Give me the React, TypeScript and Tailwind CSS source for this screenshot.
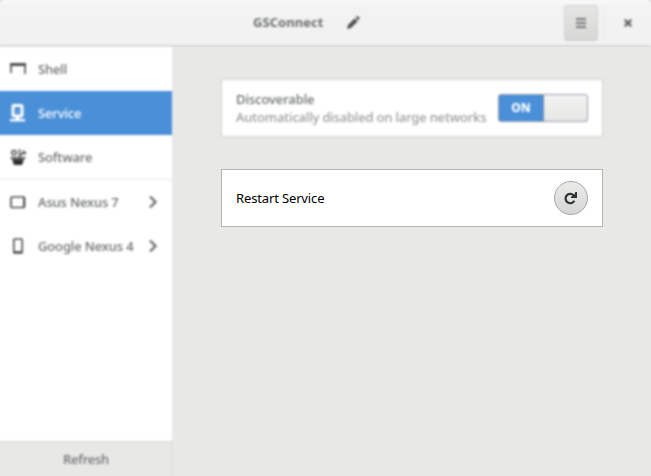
import type { ReactNode } from "react";

function ShellIcon() {
  return (
    <svg className="h-4 w-4" viewBox="0 0 16 16" fill="none" stroke="currentColor">
      <path d="M0 3.5H16" strokeWidth="3" />
      <path d="M1 4V12M15 4V13" strokeWidth="1.6" />
    </svg>
  );
}

function ServiceIcon() {
  return (
    <svg className="h-[18px] w-4" viewBox="0 0 16 18" fill="none" stroke="currentColor">
      <rect x="3" y="1.5" width="9" height="10.5" rx="1" strokeWidth="3" />
      <path d="M7.5 12V16" strokeWidth="4" />
      <path d="M7 7.5H8.5" strokeWidth="1.5" opacity="0.6" />
      <path d="M0 16.2H15" strokeWidth="2.4" />
    </svg>
  );
}

function SoftwareIcon() {
  return (
    <svg className="h-4 w-4" viewBox="0 0 16 16" fill="none" stroke="currentColor">
      <path d="M0.5 9H15.5" strokeWidth="1.8" />
      <path d="M3 11H13L11.5 15.3H4.5Z" fill="#2c2e2f" stroke="#2c2e2f" strokeWidth="1.4" />
      <circle cx="4" cy="3.8" r="2.3" strokeWidth="1.5" />
      <path d="M9.5 0V9M9.5 6.5L13 4.5M13 1.5V4.5H15.5V2" strokeWidth="1.5" />
    </svg>
  );
}

function TabletIcon() {
  return (
    <svg className="h-4 w-4" viewBox="0 0 16 16" fill="none" stroke="currentColor">
      <rect x="1" y="3" width="13.5" height="10.5" rx="1" strokeWidth="1.7" />
      <path d="M14 3.5V13" strokeWidth="1.8" />
    </svg>
  );
}

function PhoneIcon() {
  return (
    <svg className="h-4 w-4" viewBox="0 0 16 16" fill="none" stroke="currentColor">
      <rect x="3.8" y="1" width="8.4" height="14" rx="0.8" strokeWidth="1.6" />
      <path d="M4 14H12" strokeWidth="1.8" />
    </svg>
  );
}

function Chevron() {
  return (
    <svg className="mr-[11px] ml-auto h-4 w-4" viewBox="0 0 16 16" fill="none" stroke="#6e7071" strokeWidth="2.4">
      <path d="M5 2.5L10.5 8L5 13.5" />
    </svg>
  );
}

type RowProps = { icon: ReactNode; label: string; active?: boolean; device?: boolean };

function Row({ icon, label, active, device }: RowProps) {
  return (
    <div
      className={
        "flex h-11 shrink-0 items-center pl-[18px] leading-[18px] " +
        (active ? "bg-[#4a90d9] text-white" : "text-[#4c4f50]")
      }
    >
      {icon}
      <span className={"ml-3 tracking-[-0.14px] whitespace-nowrap " + (active ? "text-white" : "text-[#686b6c]")}>
        {label}
      </span>
      {device && <Chevron />}
    </div>
  );
}

export default function App() {
  return (
    <div className="flex h-[476px] w-[651px] flex-col overflow-hidden bg-[#e8e8e6] font-['Noto_Sans','Open_Sans',sans-serif] text-[13px] font-medium text-[#6c6f70]">
      <header className="h-[47px] shrink-0 overflow-hidden rounded-t-[6px] border-b border-[#dcdcda] bg-[#f3f3f3]">
        <div className="flex h-[46px] items-center border-b border-[#c8c8c6] bg-linear-to-b from-[#fafafa] via-[#f3f3f3] via-15% to-[#f2f2f2] blur-[1px]">
          <span className="ml-[253px] w-[72px] text-[13px] font-bold tracking-[0.05px] whitespace-nowrap">GSConnect</span>
          <svg className="ml-[21px] h-[14px] w-[14px]" viewBox="0 0 14 14" fill="#505354">
            <path d="M1 13L2 9L8.8 2.2L11.8 5.2L5 12Z" />
            <path d="M9.7 1.4L11 .3Q12 0 13 1T13.4 3L12.5 4.3Z" />
          </svg>
          <div className="ml-[204px] flex h-9 w-[34px] items-center justify-center rounded-[3px] border border-[#d0d0ce] bg-linear-to-b from-[#e6e6e5] to-[#d7d7d5]">
            <svg className="h-3 w-3" viewBox="0 0 12 12" stroke="#747676" strokeWidth="2">
              <path d="M1 2H11M1 6H11M1 10H11" />
            </svg>
          </div>
          <div className="ml-1.5 h-9 w-px bg-[#e9e9e8]" />
          <svg className="ml-[19px] h-2 w-2" viewBox="0 0 8 8" stroke="#646868" strokeWidth="2.4">
            <path d="M.7 .7L7.3 7.3M7.3 .7L.7 7.3" />
          </svg>
        </div>
      </header>

      <div className="flex min-h-0 flex-1">
        <aside className="-mb-2 -ml-2 flex w-[180px] shrink-0 flex-col bg-white blur-[1px]">
          <Row icon={<ShellIcon />} label="Shell" />
          <Row icon={<ServiceIcon />} label="Service" active />
          <Row icon={<SoftwareIcon />} label="Software" />
          <div className="h-px shrink-0 bg-[#e6e6e5]" />
          <Row icon={<TabletIcon />} label="Asus Nexus 7" device />
          <Row icon={<PhoneIcon />} label="Google Nexus 4" device />
          <div className="mt-auto flex h-[43px] justify-center border-t border-r border-[#d8d8d6] bg-[#e8e8e6] pt-[8px] pl-[9px] tracking-[-0.2px]">
            Refresh
          </div>
        </aside>

        <main className="flex flex-1 flex-col gap-8 pt-8 pl-[49px]">
          <section className="flex h-[58px] w-[382px] items-center border border-[#d4d4d2] bg-white pr-[14px] pl-[14px] blur-[1px]">
            <div className="leading-[18px] tracking-[-0.18px] whitespace-nowrap">
              <div className="tracking-[-0.08px] text-[#686b6c]">Discoverable</div>
              <div className="text-[#999b9b]">Automatically disabled on large networks</div>
            </div>
            <div className="ml-auto flex h-[28px] w-[90px] shrink-0 overflow-hidden rounded-[3px] border border-[#989ca6] bg-[#4a90d9]">
              <div className="flex w-11 items-center justify-center text-[12px] font-extrabold text-white">ON</div>
              <div className="flex-1 border-l border-[#7f8da6] bg-linear-to-b from-[#f3f3f3] to-[#e6e6e5]" />
            </div>
          </section>

          <section className="flex h-[58px] w-[382px] items-center justify-between border border-[#b4b4b2] bg-white pr-[14px] pl-[14px]">
            <span className="pt-0.5 font-normal tracking-[-0.14px] text-black">Restart Service</span>
            <button className="flex h-[34px] w-[34px] items-center justify-center rounded-full border border-[#a6a6a4] bg-linear-to-b from-[#ebebea] to-[#d6d6d4]">
              <svg className="mr-px h-[14px] w-[14px]" viewBox="0 0 14 14" fill="none" stroke="#2e3436">
                <path d="M9.6 4.2A4.7 4.7 0 1 0 10.4 9.8" strokeWidth="2.2" />
                <path d="M13 1V7H7V6L8.6 4.6L10.4 3.6L11.4 1Z" fill="#2e3436" stroke="none" />
              </svg>
            </button>
          </section>
        </main>
      </div>
    </div>
  );
}
